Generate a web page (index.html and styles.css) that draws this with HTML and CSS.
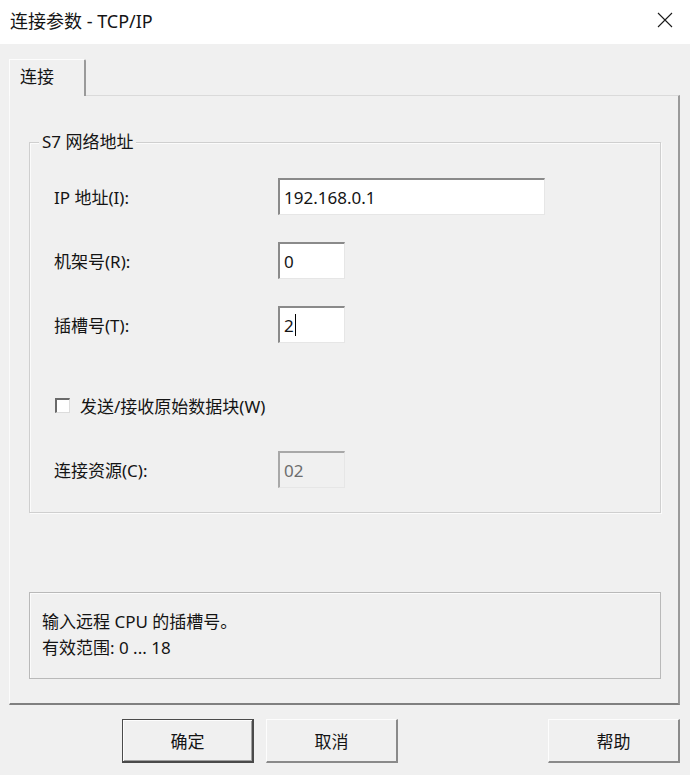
FILE: index.html
```html
<!DOCTYPE html>
<html lang="zh-CN">

<head>
    <meta charset="UTF-8">
    <meta name="viewport" content="width=device-width, initial-scale=1.0">
    <title>连接参数 - TCP/IP</title>
    <link rel="stylesheet" href="styles.css">
</head>

<body>
    <div class="dialog">
        <div class="title-bar">
            <span class="title-text">连接参数 - TCP/IP</span>
            <svg class="close-icon" width="16" height="16" viewBox="0 0 16 16">
                <path d="M1 1 L15 15 M15 1 L1 15" stroke="#1a1a1a" stroke-width="1.1" fill="none" />
            </svg>
        </div>

        <div class="client">
            <div class="tab-strip">
                <div class="tab tab-active">连接</div>
            </div>

            <div class="tab-panel">
                <div class="group">
                    <div class="group-title">S7 网络地址</div>

                    <div class="form-row row-first">
                        <span class="field-label">IP 地址(I):</span>
                        <div class="field field-wide">192.168.0.1</div>
                    </div>
                    <div class="form-row row-next">
                        <span class="field-label">机架号(R):</span>
                        <div class="field field-small">0</div>
                    </div>
                    <div class="form-row row-next">
                        <span class="field-label">插槽号(T):</span>
                        <div class="field field-small">2<span class="caret"></span></div>
                    </div>
                    <div class="check-row">
                        <span class="check-box"></span>
                        <span class="check-label">发送/接收原始数据块(W)</span>
                    </div>
                    <div class="form-row row-resource">
                        <span class="field-label">连接资源(C):</span>
                        <div class="field field-small field-disabled">02</div>
                    </div>
                </div>

                <div class="info-box">
                    <p class="info-line">输入远程 CPU 的插槽号。</p>
                    <p class="info-line">有效范围: 0 ... 18</p>
                </div>
            </div>

            <div class="button-row">
                <button class="dialog-button default-button">确定</button>
                <button class="dialog-button">取消</button>
                <button class="dialog-button help-button">帮助</button>
            </div>
        </div>
    </div>
</body>

</html>
```

FILE: styles.css
```css
body {
    margin: 0;
    font-family: "Noto Sans", "Noto Sans CJK SC", sans-serif;
    font-size: 17px;
    color: #141414;
}

.dialog {
    width: 690px;
    height: 775px;
    background-color: #f0f0f0;
    overflow: hidden;
}

.title-bar {
    height: 44px;
    background-color: white;
    display: flex;
    align-items: center;
    justify-content: space-between;
    padding-left: 10px;
    padding-right: 17px;
    box-sizing: border-box;
}

.title-text {
    font-size: 18px;
    line-height: 24px;
    margin-top: -3px;
}

.close-icon {
    margin-top: -4px;
}

.client {
    padding-left: 9px;
    padding-right: 10px;
    padding-top: 15px;
}

.tab-strip {
    display: flex;
}

.tab {
    width: 77px;
    height: 37px;
    box-sizing: border-box;
    padding-left: 10px;
    line-height: 34px;
    background-color: #f0f0f0;
    border-top: 1px solid #fdfdfd;
    border-left: 1px solid #fdfdfd;
    border-right: 2px solid #9a9a9a;
    border-top-right-radius: 2px;
    margin-bottom: -1px;
    position: relative;
    z-index: 1;
}

.tab-panel {
    border-top: 1px solid #dadada;
    border-left: 1px solid #fbfbfb;
    border-right: 2px solid #9a9a9a;
    border-bottom: 2px solid #808080;
    padding-top: 46px;
    padding-left: 19px;
    padding-right: 17px;
    padding-bottom: 24px;
}

.group {
    border: 1px solid #cfcfcf;
    box-shadow: inset 1px 1px 0 #fbfbfb, 1px 1px 0 #fbfbfb;
    padding-left: 24px;
    padding-bottom: 24px;
}

.group-title {
    width: fit-content;
    margin-top: -13px;
    margin-left: -15px;
    padding-left: 3px;
    padding-right: 3px;
    line-height: 24px;
    height: 24px;
    background-color: #f0f0f0;
}

.form-row {
    display: flex;
    align-items: center;
    height: 37px;
}

.row-first {
    margin-top: 24px;
}

.row-next {
    margin-top: 27px;
}

.row-resource {
    margin-top: 32px;
}

.field-label {
    width: 224px;
    flex-shrink: 0;
}

.field {
    height: 37px;
    box-sizing: border-box;
    background-color: white;
    border-top: 2px solid #8a8a8a;
    border-left: 2px solid #8a8a8a;
    border-right: 1px solid #e6e6e6;
    border-bottom: 1px solid #e6e6e6;
    padding-left: 4px;
    line-height: 33px;
    display: flex;
    align-items: center;
}

.field-wide {
    width: 267px;
}

.field-small {
    width: 67px;
}

.field-disabled {
    background-color: #f0f0f0;
    color: #6d6d6d;
    border-top-color: #a8a8a8;
    border-left-color: #a8a8a8;
}

.caret {
    display: inline-block;
    width: 1px;
    height: 22px;
    background-color: black;
    margin-left: 1px;
}

.check-row {
    display: flex;
    align-items: center;
    height: 28px;
    margin-top: 48px;
    padding-left: 1px;
}

.check-box {
    width: 15px;
    height: 15px;
    box-sizing: border-box;
    background-color: white;
    border-top: 2px solid #6a6a6a;
    border-left: 2px solid #6a6a6a;
    border-right: 1px solid #dcdcdc;
    border-bottom: 1px solid #dcdcdc;
    margin-right: 10px;
}

.info-box {
    margin-top: 79px;
    border: 1px solid #b9b9b9;
    box-shadow: inset 1px 1px 0 #fbfbfb;
    padding-top: 16px;
    padding-bottom: 17px;
    padding-left: 12px;
}

.info-line {
    margin: 0;
    line-height: 26px;
}

.button-row {
    display: flex;
    margin-top: 14px;
    padding-left: 113px;
}

.dialog-button {
    width: 132px;
    height: 44px;
    font-family: "Noto Sans", "Noto Sans CJK SC", sans-serif;
    font-size: 17px;
    color: #141414;
    background-color: #f0f0f0;
    border-top: 1px solid #fdfdfd;
    border-left: 1px solid #fdfdfd;
    border-right: 2px solid #8a8a8a;
    border-bottom: 2px solid #8a8a8a;
    margin-right: 12px;
    padding: 0;
}

.default-button {
    border: 1px solid #4a4a4a;
    border-right: 2px solid #4a4a4a;
    border-bottom: 2px solid #4a4a4a;
    box-shadow: inset 1px 1px 0 #fdfdfd, inset -1px -1px 0 #a0a0a0;
}

.help-button {
    margin-left: auto;
    margin-right: 0;
}
```
